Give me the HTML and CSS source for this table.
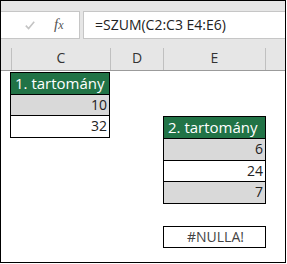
FILE: index.html
```html
<!DOCTYPE html>
<html>
<head>
<meta charset="utf-8">
<link rel="stylesheet" href="styles.css">
</head>
<body>
<div class="frame">
  <div class="toolbar">
    <div class="namebox">
      <svg class="check" width="10" height="9" viewBox="0 0 10 9"><path d="M0.8 4.6 L3.6 7.6 L9.2 0.8" fill="none" stroke="#c4c4c4" stroke-width="1.6"/></svg>
      <span class="fx">f<span class="fx-x">x</span></span>
    </div>
    <div class="formula">=SZUM(C2:C3 E4:E6)</div>
  </div>
  <div class="colheads">
    <div class="corner"></div>
    <div class="colhead">C</div>
    <div class="colhead">D</div>
    <div class="colhead">E</div>
    <div class="colhead last"></div>
  </div>
  <div class="sheet">
    <div class="range range1">
      <div class="cell head">1. tartomány</div>
      <div class="cell num shade">10</div>
      <div class="cell num">32</div>
    </div>
    <div class="range range2">
      <div class="cell head">2. tartomány</div>
      <div class="cell num shade">6</div>
      <div class="cell num">24</div>
      <div class="cell num shade">7</div>
    </div>
    <div class="range result">
      <div class="cell err">#NULLA!</div>
    </div>
  </div>
</div>
</body>
</html>
```
FILE: styles.css
```css
* { box-sizing: border-box; }
html, body { margin: 0; padding: 0; background: #fff; }
.frame {
  width: 286px;
  height: 263px;
  border: 1px solid #000;
  overflow: hidden;
  display: flex;
  flex-direction: column;
  font-family: "Open Sans", "Noto Sans", sans-serif;
}
.toolbar {
  height: 45px;
  background: #e6e6e6;
  display: flex;
  align-items: flex-start;
  padding-top: 10px;
  gap: 3px;
}
.namebox {
  width: 79px;
  height: 28px;
  background: #fff;
  border: 1px solid #c6c6c6;
  border-left: none;
  position: relative;
}
.check { position: absolute; left: 24px; top: 9px; }
.fx {
  position: absolute;
  left: 53px;
  top: 4px;
  font-family: "Liberation Serif", serif;
  font-style: italic;
  font-size: 15px;
  color: #555;
}
.fx-x { font-size: 12px; }
.formula {
  flex: 1;
  height: 28px;
  background: #fff;
  border: 1px solid #c6c6c6;
  border-right: none;
  padding-left: 11px;
  font-size: 14px;
  line-height: 26px;
  color: #222;
}
.colheads {
  height: 25px;
  background: #e6e6e6;
  border-bottom: 1px solid #9b9b9b;
  display: grid;
  grid-template-columns: 10px 99px 53px 102px 1fr;
  padding-top: 2px;
}
.colhead {
  border-left: 1px solid #c0c0c0;
  text-align: center;
  font-size: 14px;
  line-height: 20px;
  color: #333;
}
.sheet {
  flex: 1;
  display: grid;
  grid-template-columns: 9px 100px 53px 103px 1fr;
  grid-template-rows: repeat(8, 22px);
  padding-top: 1px;
}
.range { border: 1px solid #000; display: flex; flex-direction: column; }
.range1 { grid-column: 2; grid-row: 1 / span 3; }
.range2 { grid-column: 4; grid-row: 3 / span 4; }
.result { grid-column: 4; grid-row: 8; }
.cell {
  flex: 1;
  font-size: 14px;
  line-height: 20px;
  padding: 0 2px 0 4px;
  color: #222;
  border-top: 1px solid #000;
}
.cell:first-child { border-top: none; }
.head { background: #217346; color: #fff; font-size: 15px; }
.num { text-align: right; }
.shade { background: #d9d9d9; }
.err { text-align: center; color: #444; }
```
